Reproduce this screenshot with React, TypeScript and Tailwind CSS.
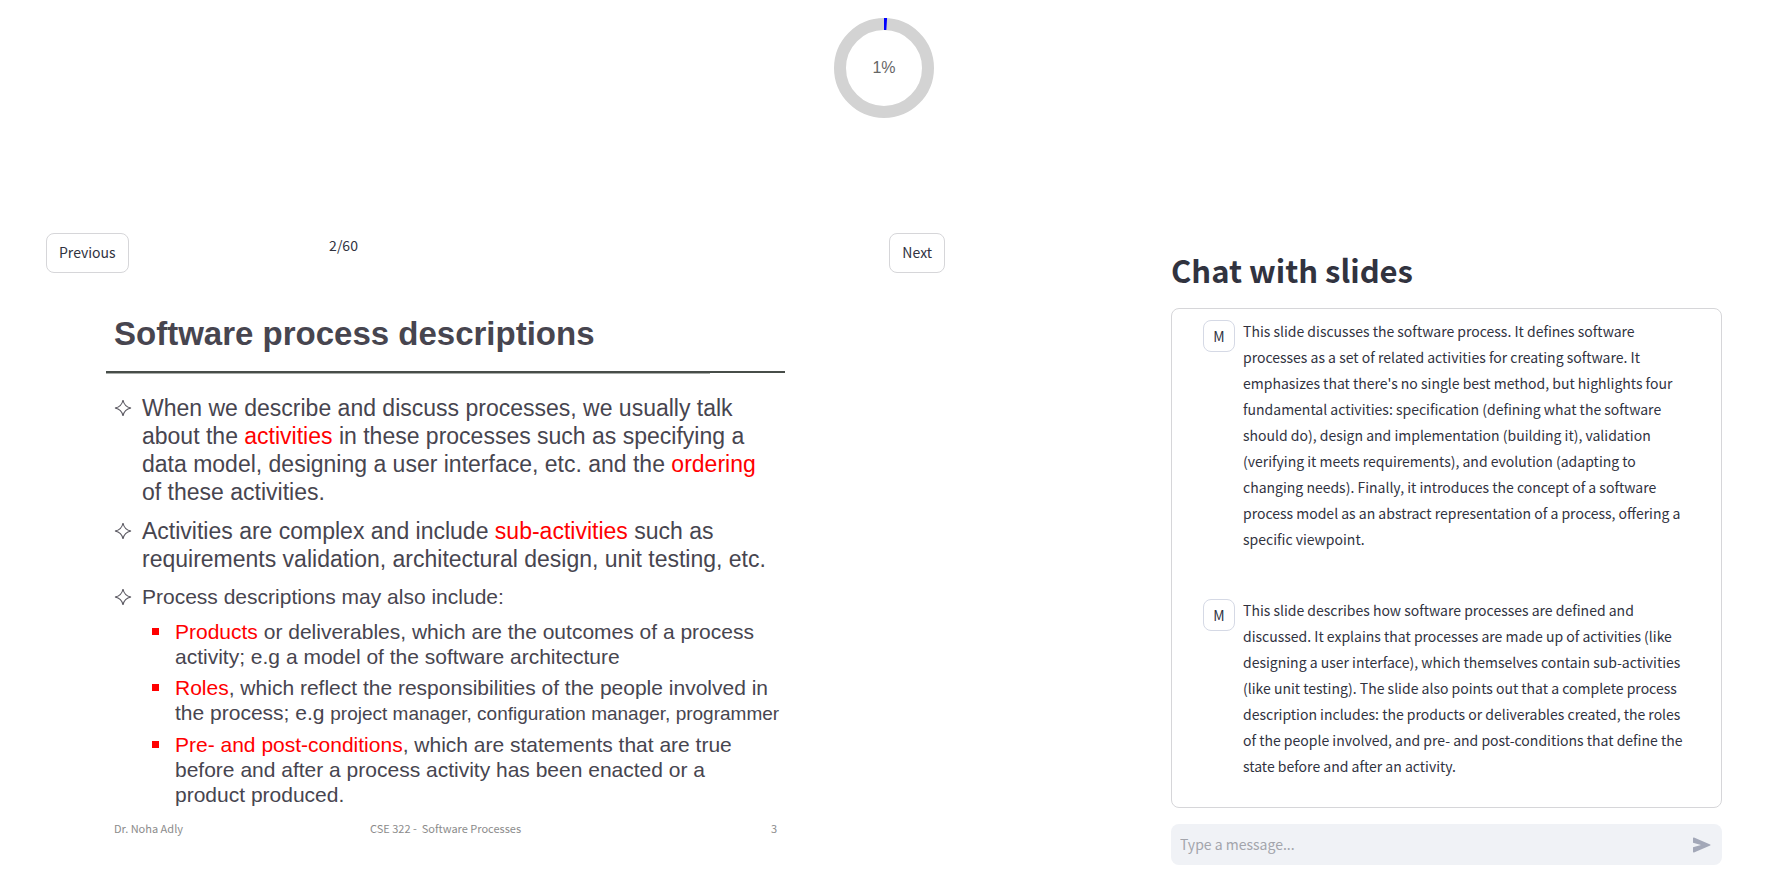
import React from "react";

function ProgressRing({ percent }: { percent: number }) {
  const circumference = 2 * Math.PI * 44;
  return (
    <div className="relative size-[100px]" role="img" aria-label={`${percent}%`}>
      <svg viewBox="0 0 100 100" className="size-full -rotate-90">
        <circle cx="50" cy="50" r="44" fill="none" stroke="#d3d3d3" strokeWidth="12" />
        <circle
          cx="50"
          cy="50"
          r="44"
          fill="none"
          stroke="#0000ff"
          strokeWidth="12"
          strokeDasharray={`${(circumference * percent) / 100} ${circumference}`}
        />
      </svg>
      <span className="absolute inset-0 flex items-center justify-center font-['Liberation_Sans',sans-serif] text-base text-[#666666]">
        {percent}%
      </span>
    </div>
  );
}

function Red({ children }: { children: React.ReactNode }) {
  return <span className="text-[#ff0000]">{children}</span>;
}

function Star() {
  return (
    <svg viewBox="0 0 18 18" className="mt-[5px] size-[18px] shrink-0" fill="none" stroke="#5b5962" strokeWidth="1.1">
      <path d="M9 1 Q10.2 7.8 17 9 Q10.2 10.2 9 17 Q7.8 10.2 1 9 Q7.8 7.8 9 1Z" />
    </svg>
  );
}

function Point({ children }: { children: React.ReactNode }) {
  return (
    <li className="flex gap-[10px]">
      <Star />
      <p className="whitespace-nowrap">{children}</p>
    </li>
  );
}

function SubPoint({ children }: { children: React.ReactNode }) {
  return (
    <li className="flex gap-4">
      <span className="mt-[9px] size-[7px] shrink-0 bg-[#ff0000]" />
      <p className="whitespace-nowrap">{children}</p>
    </li>
  );
}

function Slide() {
  return (
    <article className="w-[739px] pl-[60px] pt-[37px] font-['Liberation_Sans',sans-serif] text-[#47454f]">
      <h2 className="pl-2 text-[33px] leading-[48px] font-bold whitespace-nowrap">Software process descriptions</h2>
      <div className="mt-[13px] h-[2px] bg-[#474d49]" />
      <div className="h-px w-[89%] bg-[#a9adaa]" />
      <ul className="mt-5 flex flex-col gap-[11px] pl-2 text-[23px] leading-[28px]">
        <Point>
          When we describe and discuss processes, we usually talk
          <br />
          about the <Red>activities</Red> in these processes such as specifying a
          <br />
          data model, designing a user interface, etc. and the <Red>ordering</Red>
          <br />
          of these activities.
        </Point>
        <Point>
          Activities are complex and include <Red>sub-activities</Red> such as
          <br />
          requirements validation, architectural design, unit testing, etc.
        </Point>
      </ul>
      <ul className="mt-[10px] pl-2 text-[21px] leading-[28px]">
        <Point>Process descriptions may also include:</Point>
      </ul>
      <ul className="mt-[8px] flex flex-col gap-[6px] pl-[46px] text-[21px] leading-[25px]">
        <SubPoint>
          <Red>Products</Red> or deliverables, which are the outcomes of a process
          <br />
          activity; e.g a model of the software architecture
        </SubPoint>
        <SubPoint>
          <Red>Roles</Red>, which reflect the responsibilities of the people involved in
          <br />
          the process; e.g <span className="text-[19px]">project manager, configuration manager, programmer</span>
        </SubPoint>
        <SubPoint>
          <Red>Pre- and post-conditions</Red>, which are statements that are true
          <br />
          before and after a process activity has been enacted or a
          <br />
          product produced.
        </SubPoint>
      </ul>
      <footer className="mt-3 flex pr-2 pl-2 font-['Noto_Sans_CJK_SC',sans-serif] text-[11px] leading-[18px] text-[#8b8b8b]">
        <span className="w-64">Dr. Noha Adly</span>
        <span className="flex-1 whitespace-pre">CSE 322 -  Software Processes</span>
        <span>3</span>
      </footer>
    </article>
  );
}

function Message({ children }: { children: React.ReactNode }) {
  return (
    <li className="flex gap-2">
      <span className="flex size-8 shrink-0 items-center justify-center rounded-lg border border-[#d5d9e5] text-[14px]">
        M
      </span>
      <p className="-mt-0.5 text-[14px] leading-[26px] whitespace-nowrap">{children}</p>
    </li>
  );
}

const buttonClass = "flex h-10 items-center justify-center rounded-lg border border-[#d6d6d9] bg-white px-3 pb-0.5 text-[14px]";

export default function App() {
  return (
    <main className="min-h-screen bg-white pt-[18px] pr-[61px] pl-[46px] font-['Noto_Sans_CJK_SC',sans-serif] text-[#31333f]">
      <header className="flex h-[215px] justify-center">
        <ProgressRing percent={1} />
      </header>
      <div className="grid grid-cols-[899fr_226fr_551fr]">
        <section>
          <nav className="grid grid-cols-[283fr_560fr_auto] items-start">
            <div className="flex">
              <button type="button" className={buttonClass}>Previous</button>
            </div>
            <span className="text-[14px] leading-6">2/60</span>
            <button type="button" className={buttonClass}>Next</button>
          </nav>
          <Slide />
        </section>
        <section className="col-start-3 pt-[15px]">
          <h1 className="text-[31px] leading-[43px] font-bold">Chat with slides</h1>
          <ul className="mt-[17px] flex h-[500px] flex-col gap-[47px] overflow-hidden rounded-lg border border-[#d6d6d9] px-[31px] pt-[11px]">
            <Message>
              This slide discusses the software process. It defines software
              <br />
              processes as a set of related activities for creating software. It
              <br />
              emphasizes that there's no single best method, but highlights four
              <br />
              fundamental activities: specification (defining what the software
              <br />
              should do), design and implementation (building it), validation
              <br />
              (verifying it meets requirements), and evolution (adapting to
              <br />
              changing needs). Finally, it introduces the concept of a software
              <br />
              process model as an abstract representation of a process, offering a
              <br />
              specific viewpoint.
            </Message>
            <Message>
              This slide describes how software processes are defined and
              <br />
              discussed. It explains that processes are made up of activities (like
              <br />
              designing a user interface), which themselves contain sub-activities
              <br />
              (like unit testing). The slide also points out that a complete process
              <br />
              description includes: the products or deliverables created, the roles
              <br />
              of the people involved, and pre- and post-conditions that define the
              <br />
              state before and after an activity.
            </Message>
          </ul>
          <form className="mt-4 flex h-[41px] items-center rounded-lg bg-[#f0f2f6] pr-2" onSubmit={(e) => e.preventDefault()}>
            <input
              type="text"
              aria-label="Message"
              placeholder="Type a message..."
              className="h-full min-w-0 flex-1 bg-transparent pb-0.5 pl-[9px] text-[14px] outline-none placeholder:text-[#a3a5ac]"
            />
            <button type="submit" aria-label="Send" className="flex size-6 items-center justify-center">
              <svg viewBox="0 0 18 16" className="h-4 w-[18px]" fill="#a3a8b8">
                <path d="M0 1.2Q0 .2 1 .5L17.2 7.4Q18 8 17.2 8.6L1 15.5Q0 15.8 0 14.8V10.2L8 8 0 5.8Z" />
              </svg>
            </button>
          </form>
        </section>
      </div>
    </main>
  );
}
